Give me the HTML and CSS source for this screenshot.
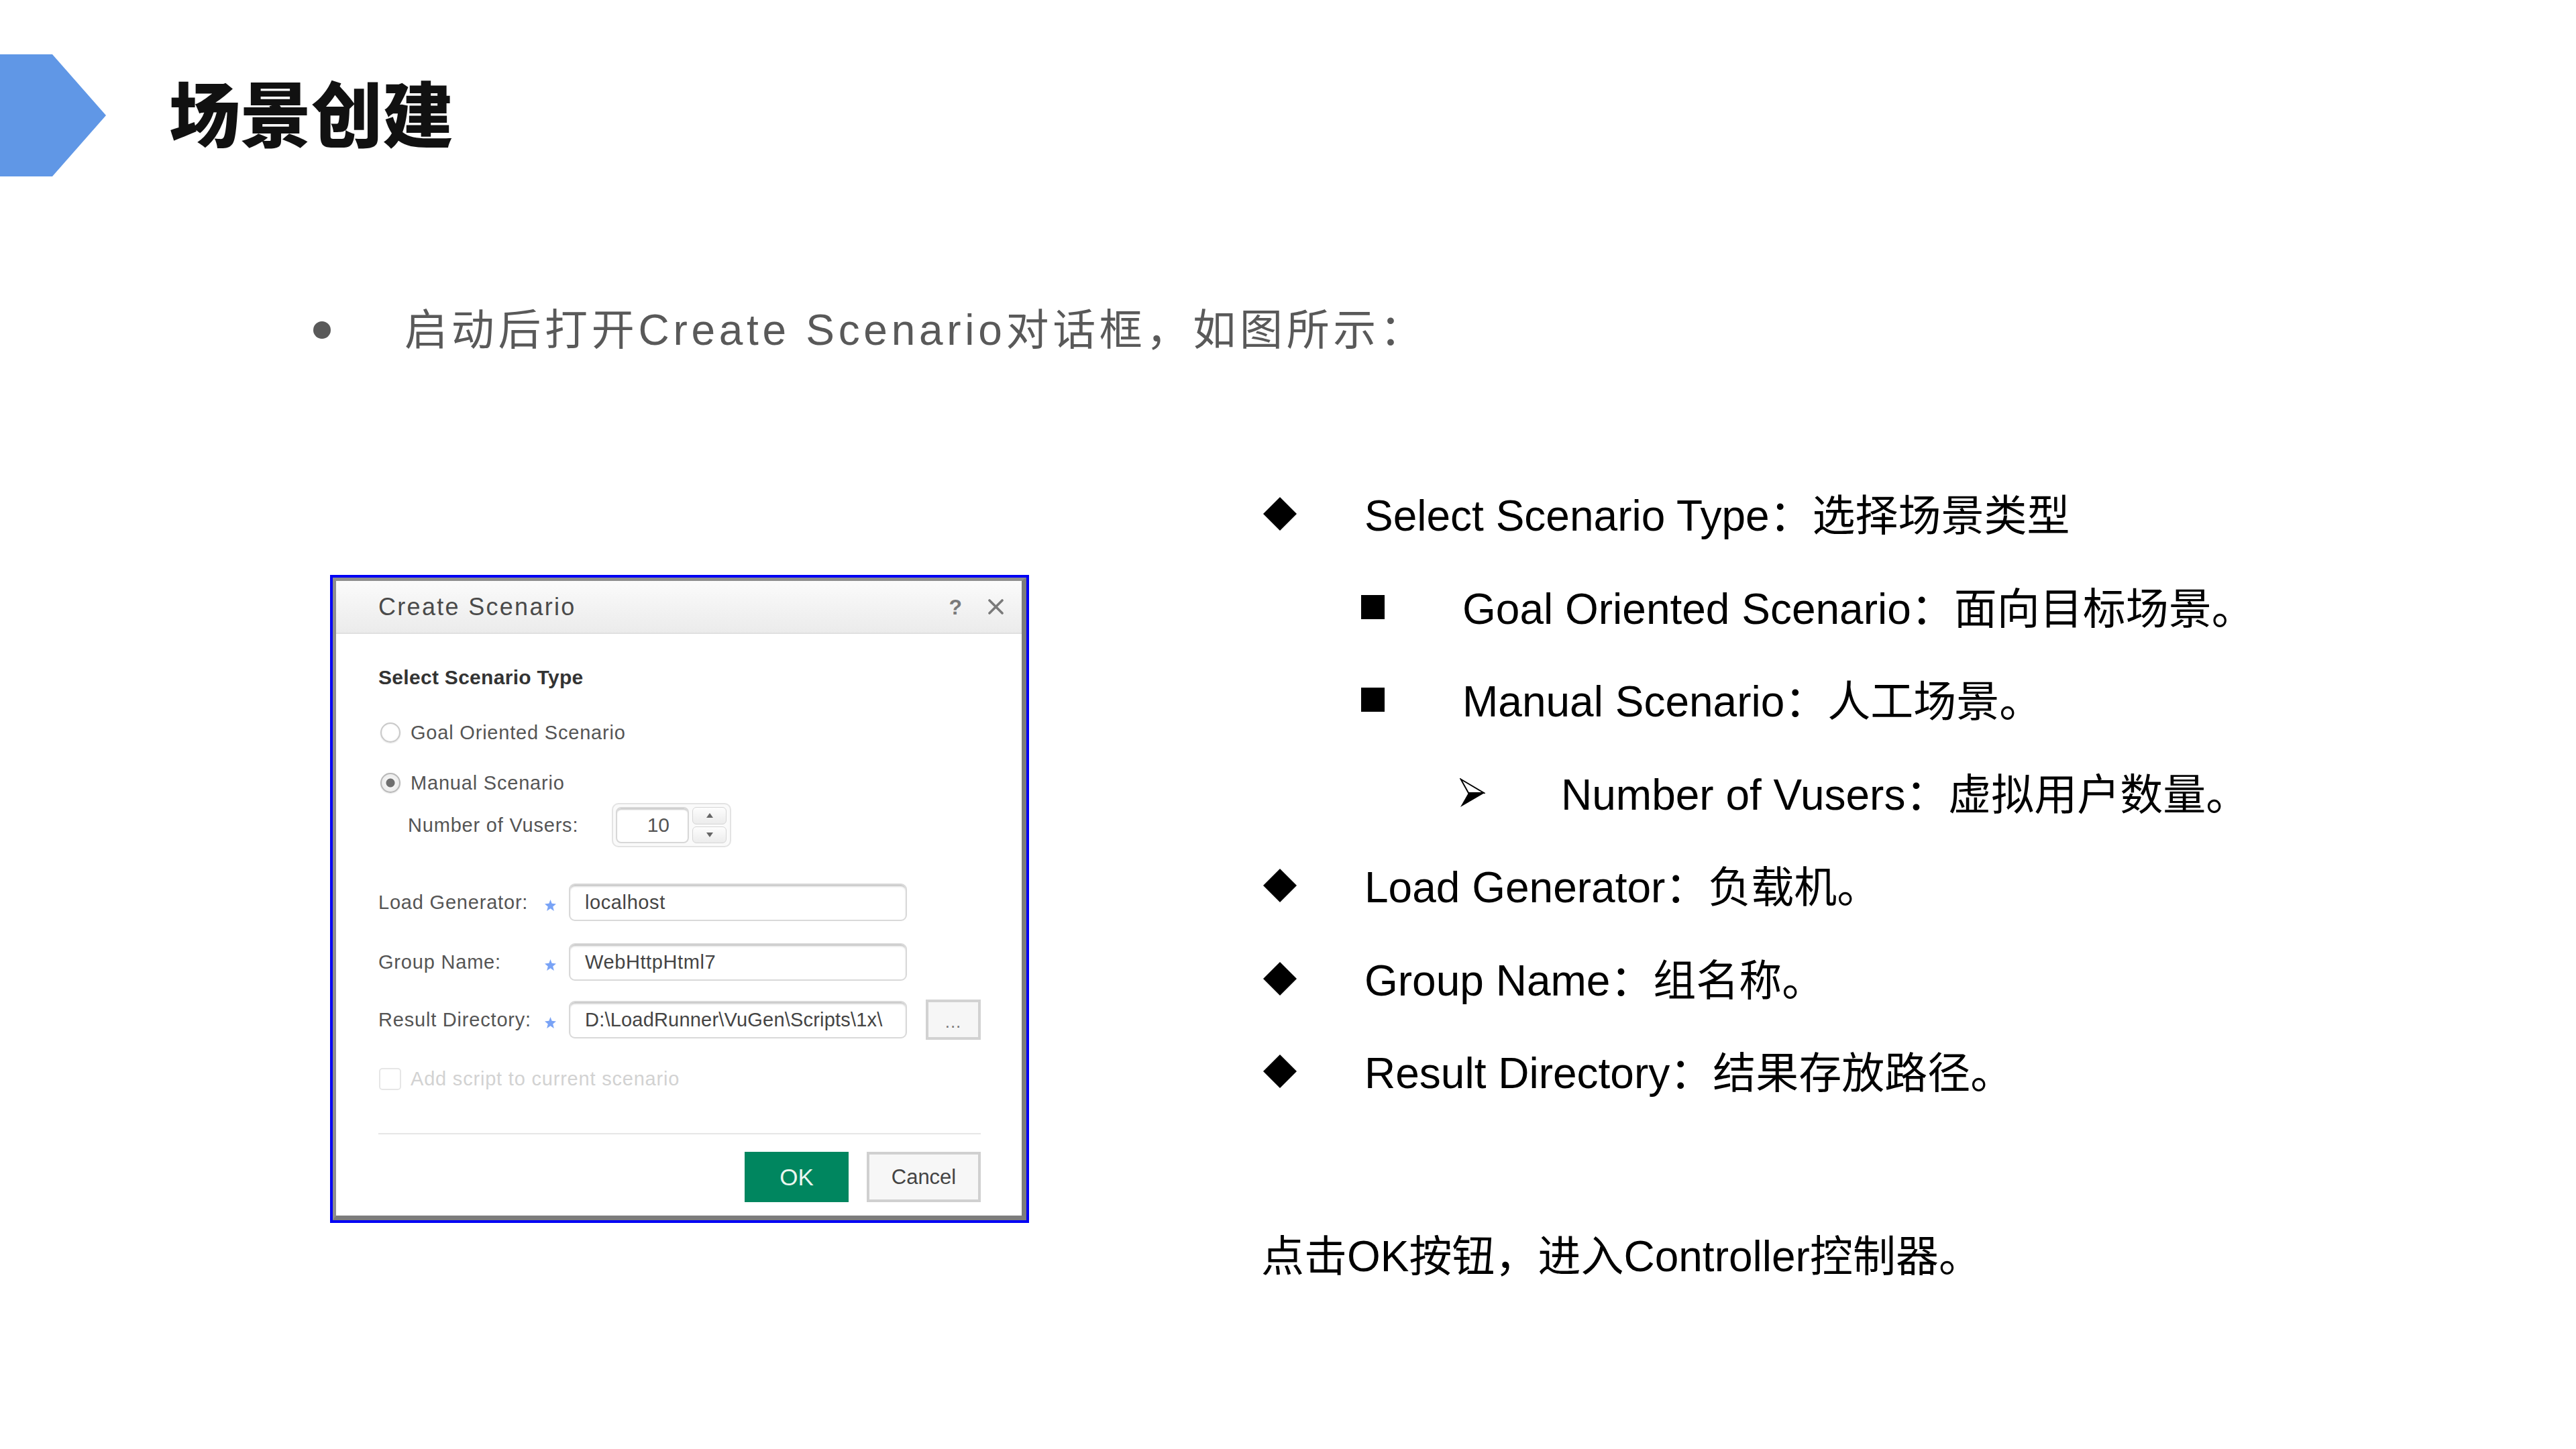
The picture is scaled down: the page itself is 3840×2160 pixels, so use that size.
FILE: index.html
```html
<!DOCTYPE html>
<html lang="zh-CN">
<head>
<meta charset="utf-8">
<title>场景创建</title>
<link rel="stylesheet" href="styles.css">
</head>
<body>
<div class="slide">
  <header class="header">
    <svg class="chevron" width="158" height="182" viewBox="0 0 158 182"><polygon points="0,0 78,0 158,91 78,182 0,182" fill="#6097e6"/></svg>
    <h1 class="title">场景创建</h1>
  </header>

  <div class="intro"><span class="dot"></span><span class="intro-text">启动后打开Create Scenario对话框，如图所示：</span></div>

  <div class="main">
    <div class="dialog">
      <div class="dialog-inner">
        <div class="titlebar">
          <span class="dlg-title">Create Scenario</span>
          <span class="tb-icons">
            <span class="help">?</span>
            <svg class="close" width="25" height="23" viewBox="0 0 25 23"><path d="M3 2 L22 21 M22 2 L3 21" stroke="#7a7a7a" stroke-width="3.6" stroke-linecap="round"/></svg>
          </span>
        </div>
        <div class="dlg-body">
          <div class="row row-heading">Select Scenario Type</div>
          <div class="row row-radio1"><span class="radio"></span><span>Goal Oriented Scenario</span></div>
          <div class="row row-radio2"><span class="radio checked"></span><span>Manual Scenario</span></div>
          <div class="row row-vusers">
            <span class="vlabel">Number of Vusers:</span>
            <div class="spinner">
              <div class="spin-input">10</div>
              <div class="spin-btns"><div class="spin-btn up"></div><div class="spin-btn down"></div></div>
            </div>
          </div>
          <div class="row field f-load">
            <span class="flabel">Load Generator:</span>
            <span class="star"><svg width="17" height="17" viewBox="0 0 16 16"><polygon points="8,0 10,5.5 16,6 11.5,9.8 13,16 8,12.5 3,16 4.5,9.8 0,6 6,5.5" fill="#79a3f6"/></svg></span>
            <div class="input">localhost</div>
          </div>
          <div class="row field f-group">
            <span class="flabel">Group Name:</span>
            <span class="star"><svg width="17" height="17" viewBox="0 0 16 16"><polygon points="8,0 10,5.5 16,6 11.5,9.8 13,16 8,12.5 3,16 4.5,9.8 0,6 6,5.5" fill="#79a3f6"/></svg></span>
            <div class="input">WebHttpHtml7</div>
          </div>
          <div class="row field f-result">
            <span class="flabel">Result Directory:</span>
            <span class="star"><svg width="17" height="17" viewBox="0 0 16 16"><polygon points="8,0 10,5.5 16,6 11.5,9.8 13,16 8,12.5 3,16 4.5,9.8 0,6 6,5.5" fill="#79a3f6"/></svg></span>
            <div class="input input-path">D:\LoadRunner\VuGen\Scripts\1x\</div>
            <div class="browse">...</div>
          </div>
          <div class="row row-check"><span class="checkbox"></span><span class="disabled">Add script to current scenario</span></div>
          <div class="sep"></div>
          <div class="buttons">
            <div class="btn ok">OK</div>
            <div class="btn cancel">Cancel</div>
          </div>
        </div>
      </div>
    </div>

    <div class="notes">
      <ul class="list">
        <li class="l1"><span class="bullet"><svg width="50" height="50" viewBox="0 0 50 50"><polygon points="25,0 50,25 25,50 0,25" fill="#000"/></svg></span><span>Select Scenario Type：选择场景类型</span></li>
        <li class="l2"><span class="bullet"><span class="sq"></span></span><span>Goal Oriented Scenario：面向目标场景。</span></li>
        <li class="l2"><span class="bullet"><span class="sq"></span></span><span>Manual Scenario：人工场景。</span></li>
        <li class="l3"><span class="bullet"><svg width="38" height="44" viewBox="0 0 38 44"><polygon points="1.5,1.5 36,22 13,22" fill="#fff" stroke="#000" stroke-width="2" stroke-linejoin="miter"/><polygon points="13,22 37,22 1,43" fill="#000"/></svg></span><span>Number of Vusers：虚拟用户数量。</span></li>
        <li class="l1"><span class="bullet"><svg width="50" height="50" viewBox="0 0 50 50"><polygon points="25,0 50,25 25,50 0,25" fill="#000"/></svg></span><span>Load Generator：负载机。</span></li>
        <li class="l1"><span class="bullet"><svg width="50" height="50" viewBox="0 0 50 50"><polygon points="25,0 50,25 25,50 0,25" fill="#000"/></svg></span><span>Group Name：组名称。</span></li>
        <li class="l1"><span class="bullet"><svg width="50" height="50" viewBox="0 0 50 50"><polygon points="25,0 50,25 25,50 0,25" fill="#000"/></svg></span><span>Result Directory：结果存放路径。</span></li>
      </ul>
      <p class="final">点击OK按钮，进入Controller控制器。</p>
    </div>
  </div>
</div>
</body>
</html>
```

FILE: styles.css
```css
* { box-sizing: border-box; margin: 0; padding: 0; }
html, body { width: 3840px; height: 2160px; background: #fff; }
body { font-family: "Liberation Sans", "Noto Sans CJK SC", sans-serif; overflow: hidden; }
.slide { width: 3840px; height: 2160px; }

/* header */
.header { display: flex; align-items: center; padding-top: 81px; height: 263px; }
.chevron { display: block; flex: none; }
.title { margin-left: 94px; margin-bottom: 14px; font-family: "Noto Sans CJK SC", sans-serif; font-weight: 900; font-size: 106px; line-height: 1; color: #111; }

/* intro */
.intro { display: flex; align-items: center; margin-top: 179px; height: 100px; padding-left: 467px; }
.dot { width: 26px; height: 26px; border-radius: 50%; background: #595959; flex: none; }
.intro-text { margin-left: 110px; font-size: 64px; letter-spacing: 5.7px; color: #595959; line-height: 100px; white-space: nowrap; }

/* main */
.main { display: flex; align-items: flex-start; margin-top: 152px; }

/* dialog */
.dialog { margin-left: 492px; margin-top: 163px; width: 1042px; height: 966px; border: 4px solid #0000f5; flex: none; }
.dialog-inner { width: 100%; height: 100%; border-style: solid; border-color: #8e8e8e #7c7c7c #7c7c7c #8e8e8e; border-width: 5px 7px 7px 5px; background: #fff; display: flex; flex-direction: column; }
.titlebar { height: 79px; flex: none; display: flex; align-items: center; justify-content: space-between; padding: 0 26px 0 63px; background: linear-gradient(#fbfbfb, #ebebeb); border-bottom: 2px solid #e0e0e0; }
.dlg-title { font-size: 36px; letter-spacing: 2.3px; color: #4a4a4a; }
.tb-icons { display: flex; align-items: center; gap: 38px; }
.help { font-size: 32px; font-weight: bold; color: #7a7a7a; line-height: 1; }
.close { display: block; }

.dlg-body { flex: 1; display: flex; flex-direction: column; padding: 35px 61px 20px 63px; font-size: 29px; letter-spacing: 0.8px; color: #555; }
.row { display: flex; align-items: center; flex: none; white-space: nowrap; }
.row-heading { height: 60px; font-weight: bold; font-size: 30px; letter-spacing: 0.3px; color: #333; }
.row-radio1 { height: 60px; margin-top: 22px; }
.row-radio2 { height: 60px; margin-top: 15px; }
.radio { width: 30px; height: 30px; border-radius: 50%; margin-left: 3px; margin-right: 15px; flex: none; border: 2px solid #c9c9c9; background: radial-gradient(circle, #ffffff 55%, #eeeeee 100%); box-shadow: 0 1px 2px rgba(0,0,0,0.12); }
.radio.checked { border-color: #b8b8b8; background: radial-gradient(circle, #6f6f6f 0, #6f6f6f 6px, #f4f4f4 7px, #e6e6e6 100%); }

.row-vusers { height: 66px; }
.vlabel { margin-left: 44px; width: 304px; flex: none; }
.spinner { width: 178px; height: 66px; border: 2px solid #e3e3e3; border-radius: 10px; padding: 4px; display: flex; gap: 5px; background: #fafafa; flex: none; }
.spin-input { width: 109px; height: 54px; border: 2px solid #d8d8d8; border-radius: 8px; background: #fff; box-shadow: inset 0 3px 2px -1px #c8c8c8; text-align: right; padding-right: 27px; font-size: 30px; line-height: 50px; color: #555; letter-spacing: 0; }
.spin-btns { width: 51px; display: flex; flex-direction: column; gap: 3px; }
.spin-btn { flex: 1; border: 1px solid #d6d6d6; border-radius: 6px; background: linear-gradient(#fdfdfd, #ececec); display: flex; align-items: center; justify-content: center; }
.spin-btn.up::after { content: ""; border-left: 5px solid transparent; border-right: 5px solid transparent; border-bottom: 7px solid #666; }
.spin-btn.down::after { content: ""; border-left: 5px solid transparent; border-right: 5px solid transparent; border-top: 7px solid #666; }

.field { height: 56px; }
.f-load { margin-top: 54px; }
.f-group { margin-top: 33px; }
.f-result { height: 60px; margin-top: 28px; }
.flabel { width: 248px; flex: none; }
.star { width: 36px; flex: none; display: flex; align-items: center; padding-top: 8px; }
.star svg { display: block; }
.input { width: 504px; height: 56px; flex: none; border: 2px solid #d9d9d9; border-radius: 9px; background: #fff; box-shadow: inset 0 3px 3px -1px #bdbdbd; padding-left: 22px; padding-right: 4px; line-height: 52px; color: #444; overflow: hidden; white-space: nowrap; letter-spacing: 0.6px; }
.input-path { letter-spacing: 0.2px; }
.browse { margin-left: 28px; width: 82px; height: 60px; flex: none; border: 4px solid #d2d2d2; background: #f6f6f6; color: #777; text-align: center; font-size: 26px; line-height: 58px; letter-spacing: 1px; }

.row-check { height: 60px; margin-top: 28px; }
.checkbox { width: 33px; height: 33px; border: 2px solid #e6e6e6; border-radius: 5px; margin-left: 1px; margin-right: 14px; flex: none; }
.disabled { color: #d2d2d2; }
.sep { height: 2px; background: #e6e6e6; margin-top: 51px; flex: none; }
.buttons { display: flex; justify-content: flex-end; gap: 27px; margin-top: 26px; flex: none; }
.btn { height: 75px; display: flex; align-items: center; justify-content: center; letter-spacing: 0; }
.ok { width: 155px; background: #00865f; color: #eaf6ef; font-size: 35px; }
.cancel { width: 170px; border: 4px solid #d0d0d0; background: #f7f7f7; color: #444; font-size: 31px; }

/* notes */
.notes { margin-left: 349px; }
.list { list-style: none; }
.list li { height: 138.5px; display: flex; align-items: center; font-size: 64px; color: #000; white-space: nowrap; }
.bullet { width: 151px; flex: none; display: flex; align-items: center; padding-top: 6px; }
.bullet svg { display: block; }
.sq { display: block; width: 35px; height: 36px; background: #000; }
.l2 { padding-left: 146px; }
.l3 { padding-left: 293px; }
.final { margin-top: 140px; margin-left: -3px; line-height: 138.5px; font-size: 64px; color: #000; white-space: nowrap; }
```
